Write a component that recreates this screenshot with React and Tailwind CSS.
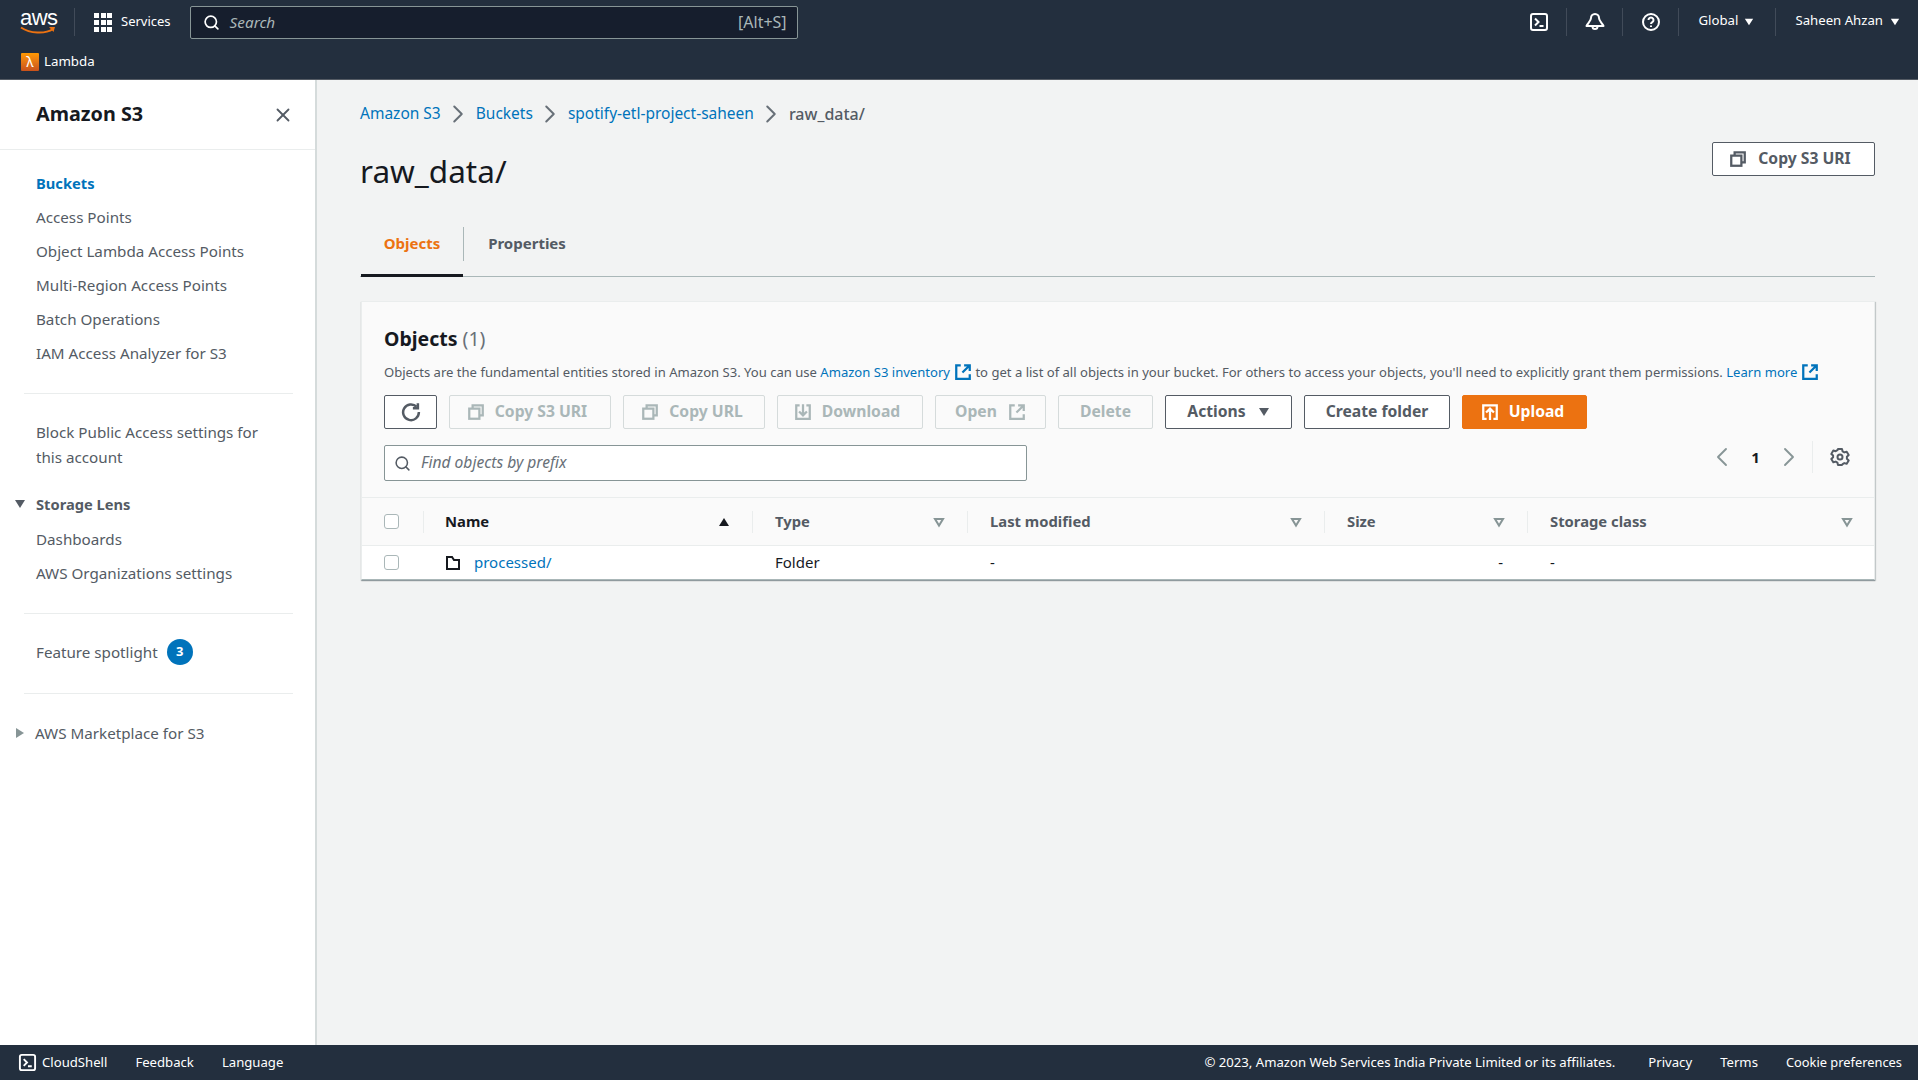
import { Search, X, ChevronRight, ChevronLeft } from "lucide-react";

const Terminal = ({ className }) => (
  <svg viewBox="0 0 20 20" fill="none" stroke="currentColor" className={className}>
    <rect x="2" y="2" width="16" height="16" rx="2" strokeWidth="2" />
    <path d="M6 6.5 9.5 10 6 13.5M10.5 14h4" strokeWidth="2" />
  </svg>
);

const Bell = ({ className }) => (
  <svg viewBox="0 0 20 20" fill="none" stroke="currentColor" strokeWidth="2" className={className}>
    <path d="M10 2C7.500 2 6 4 6 6c0 3-3 5-4.500 8h17C17 11 14 9 14 6c0-2-1.500-4-4-4Z" strokeLinejoin="round" />
    <path d="M7.500 14.500a2.500 2.500 0 0 0 5 0" />
  </svg>
);

const Help = ({ className }) => (
  <svg viewBox="0 0 20 20" fill="none" stroke="currentColor" strokeWidth="2" className={className}>
    <circle cx="10" cy="10" r="8" />
    <path d="M7.500 8a2.500 2.500 0 1 1 3.800 2.100c-.9.600-1.300 1-1.300 2" />
    <path d="M10 13.500v1.500" />
  </svg>
);

const Copy = ({ className }) => (
  <svg viewBox="0 0 16 16" fill="none" stroke="currentColor" strokeWidth="2" className={className}>
    <rect x="2" y="5" width="9" height="9" />
    <path d="M5 5V2h9v9h-3" />
  </svg>
);

const External = ({ className }) => (
  <svg viewBox="0 0 16 16" fill="none" stroke="currentColor" strokeWidth="2" className={className}>
    <path d="M6 2H2v12h12v-4M9 2h5v5M14 2 7.500 8.500" />
  </svg>
);

const Download = ({ className }) => (
  <svg viewBox="0 0 16 16" fill="none" stroke="currentColor" strokeWidth="2" className={className}>
    <path d="M5 2H2v12h12V2h-3M4.500 7.500 8 11l3.500-3.500M8 1v10" />
  </svg>
);

const UploadIcon = ({ className }) => (
  <svg viewBox="0 0 16 16" fill="none" stroke="currentColor" strokeWidth="2" className={className}>
    <path d="M5 14H2V2h12v12h-3M4.500 8.500 8 5l3.500 3.500M8 5v10" />
  </svg>
);

const Refresh = ({ className }) => (
  <svg viewBox="0 0 16 16" fill="none" stroke="currentColor" strokeWidth="2" className={className}>
    <path d="M12.500 3.800A6.300 6.300 0 1 0 14.300 8" />
    <path d="M13.500 1v4h-4" />
  </svg>
);

const Gear = ({ className }) => (
  <svg viewBox="0 0 20 20" fill="none" stroke="currentColor" strokeWidth="2" className={className}>
    <path d="M8 2h4l.6 2.400 1.700 1 2.400-.7 2 3.400-1.800 1.700v1.900l1.800 1.700-2 3.400-2.400-.7-1.700 1L12 18H8l-.6-2.400-1.700-1-2.400.7-2-3.400 1.800-1.700V8.600L1.300 6.900l2-3.400 2.400.7 1.700-1Z" strokeLinejoin="round" />
    <circle cx="10" cy="10" r="2.500" />
  </svg>
);

const Folder = ({ className }) => (
  <svg viewBox="0 0 16 16" fill="none" stroke="currentColor" strokeWidth="2" className={className}>
    <path d="M2 2h5l2 3h5v9H2Z" />
  </svg>
);

const Caret = ({ className }) => (
  <svg viewBox="0 0 12 12" fill="currentColor" className={className}>
    <path d="M1 2h10L6 10Z" />
  </svg>
);

const SortOff = () => (
  <svg viewBox="0 0 12 12" fill="none" stroke="#879596" strokeWidth="2" className="w-3 h-3">
    <path d="M2 3h8L6 9.500Z" />
  </svg>
);

const navTop = ["Access Points", "Object Lambda Access Points", "Multi-Region Access Points", "Batch Operations", "IAM Access Analyzer for S3"];

const Crumb = () => <ChevronRight className="w-[30px] h-[30px] text-[#687078] mx-[2.5px]" strokeWidth={1.6} />;

const Sidebar = () => (
  <aside className="w-[317px] shrink-0 bg-white border-r-2 border-[#d5dbdb] text-[#545b64] text-[15.2px]">
    <div className="h-[70px] border-b border-[#eaeded] flex items-center justify-between pl-9 pr-[21px]">
      <span className="text-[19.8px] font-bold text-[#16191f] -mt-[2px]">Amazon S3</span>
      <X className="w-[22px] h-[22px] text-[#545b64]" strokeWidth={2} />
    </div>
    <nav className="pt-4">
      <a className="flex h-[34px] items-center pl-9 font-bold text-[14.7px] text-[#0073bb]">Buckets</a>
      {navTop.map((item) => (
        <a key={item} className="flex h-[34px] items-center pl-9">{item}</a>
      ))}
      <div className="h-px bg-[#eaeded] ml-6 mr-[22px] mt-[23px]" />
      <div className="pl-9 pr-8 pt-[26px] leading-[25px]">Block Public Access settings for this account</div>
      <div className="flex h-[34px] items-center mt-[17px] pl-[14px] font-bold text-[14.7px]">
        <Caret className="w-3 h-3 mr-[10px]" />
        Storage Lens
      </div>
      <a className="flex h-[34px] items-center pl-9 mt-px">Dashboards</a>
      <a className="flex h-[34px] items-center pl-9">AWS Organizations settings</a>
      <div className="h-px bg-[#eaeded] ml-6 mr-[22px] mt-[23px]" />
      <div className="flex items-center pl-9 mt-[25px] h-[26px]">
        Feature spotlight
        <span className="ml-[9px] w-[26px] h-[26px] rounded-full bg-[#0073bb] text-white text-[13px] font-bold flex items-center justify-center">3</span>
      </div>
      <div className="h-px bg-[#eaeded] ml-6 mr-[22px] mt-[28px]" />
      <div className="flex items-center h-[34px] mt-[22px] pl-[14px]">
        <Caret className="w-3 h-3 mr-[9px] -rotate-90 text-[#879596]" />
        AWS Marketplace for S3
      </div>
    </nav>
  </aside>
);

const Btn = ({ children, w, disabled, primary }) => (
  <button
    className={`h-[34px] rounded-[2px] border flex items-center justify-center gap-2 text-[15.7px] font-bold ${w} ${
      primary
        ? "bg-[#ec7211] border-[#ec7211] text-white"
        : disabled
        ? "bg-[#fafafa] border-[#d5dbdb] text-[#aab7b8]"
        : "bg-white border-[#545b64] text-[#545b64]"
    }`}
  >
    {children}
  </button>
);

const HeaderCell = ({ label, strong, sorted, pl = "pl-[23px]", pr = "pr-[22px]" }) => (
  <div className={`flex items-center justify-between ${pl} ${pr} relative font-bold text-[14.8px] ${strong ? "text-[#16191f]" : "text-[#545b64]"}`}>
    <span className="absolute left-0 top-[13px] h-[22px] w-px bg-[#eaeded]" />
    {label}
    {sorted ? <Caret className="w-3 h-3 rotate-180 text-[#16191f]" /> : <SortOff />}
  </div>
);

const Box = () => <span className="w-[15px] h-[15px] rounded-[3px] border border-[#aab7b8] bg-white block -mt-px" />;

export default function App() {
  return (
    <div className="min-h-screen h-screen flex flex-col bg-[#f2f3f3] font-['Noto_Sans',sans-serif] overflow-hidden">
      <header className="h-[80px] shrink-0 bg-[#232f3e] border-b border-[#545b64] text-white">
        <div className="h-[44px] flex items-center">
          <div className="w-[74px] pl-5 relative">
            <div className="text-[22px] leading-[18px] font-['Liberation_Sans',sans-serif] tracking-[-0.5px] text-white">aws</div>
            <svg viewBox="0 0 36 10" className="w-9 h-[10px] -mt-px">
              <path d="M1 1.500c9 6 24 7 32 1.500" fill="none" stroke="#ec7211" strokeWidth="2" />
              <path d="M29 1h6l-1.500 5Z" fill="#ec7211" />
            </svg>
          </div>
          <div className="w-px h-7 bg-[#414b59]" />
          <div className="grid grid-cols-3 gap-[2px] w-[18px] ml-[19px]">
            {[...Array(9)].map((_, i) => (
              <span key={i} className="w-[5px] h-[5px] bg-white" />
            ))}
          </div>
          <span className="text-[13px] ml-[9px]">Services</span>
          <div className="ml-[19px] w-[608px] h-[33px] bg-[#161e2d] border border-[#879596] rounded-[2px] flex items-center pl-3 pr-[10px] text-[#aab7b8] text-[15.3px]">
            <Search className="w-[17px] h-[17px] text-white mr-[10px]" strokeWidth={2.4} />
            <span className="italic flex-1">Search</span>
            <span className="text-[16px]">[Alt+S]</span>
          </div>
          <div className="flex-1" />
          <Terminal className="w-5 h-5" />
          <div className="w-px h-7 bg-[#414b59] ml-[17px]" />
          <Bell className="w-5 h-5 ml-[18px]" />
          <div className="w-px h-7 bg-[#414b59] ml-[17px]" />
          <Help className="w-5 h-5 ml-[18px]" />
          <div className="w-px h-7 bg-[#414b59] ml-[17px]" />
          <span className="text-[13.2px] ml-5 -mt-[2px]">Global</span>
          <Caret className="w-[10px] h-[10px] ml-[6px] mr-[21px]" />
          <div className="w-px h-7 bg-[#414b59]" />
          <span className="text-[13.2px] ml-[19px] -mt-[2px]">Saheen Ahzan</span>
          <Caret className="w-[10px] h-[10px] ml-[7px] mr-[18px]" />
        </div>
        <div className="h-[35px] flex items-center pl-[21px] text-[13.3px]">
          <span className="w-[18px] h-[18px] rounded-[1px] bg-gradient-to-t from-[#c8511b] to-[#ff9900] flex items-center justify-center text-white text-[14px] leading-none mr-[5px]">λ</span>
          Lambda
        </div>
      </header>

      <div className="flex-1 flex min-h-0">
        <Sidebar />
        <main className="flex-1 pl-[43px] pr-[43px] pt-[23px] min-w-0">
          <div className="flex items-center h-[22px] text-[15.5px]">
            <a className="text-[#0073bb]">Amazon S3</a>
            <Crumb />
            <a className="text-[#0073bb]">Buckets</a>
            <Crumb />
            <a className="text-[#0073bb]">spotify-etl-project-saheen</a>
            <Crumb />
            <span className="text-[#545b64] font-medium text-[16px]">raw_data/</span>
          </div>

          <div className="flex items-start justify-between mt-[21px]">
            <h1 className="text-[31.5px] leading-[50px] text-[#16191f]">raw_data/</h1>
            <div className="-mt-[4px]">
              <Btn w="w-[163px] pr-[7px]"><Copy className="w-[18px] h-[18px]" /><span className="ml-[3px]">Copy S3 URI</span></Btn>
            </div>
          </div>

          <div className="flex mt-[30px] h-[51px] border-b border-[#aab7b8]">
            <div className="w-[102px] ml-[1px] h-[51px] border-b-[3px] border-[#16191f] flex items-center justify-center text-[#ec7211] font-bold text-[15px] pb-[13px]">Objects</div>
            <div className="w-px h-[34px] bg-[#aab7b8] mt-[1px]" />
            <div className="w-[126px] flex items-center justify-center text-[#545b64] font-bold text-[15px] pb-[16px] h-[51px]">Properties</div>
          </div>

          <section className="mt-[24px] ml-[1px] bg-[#fafafa] border border-[#eaeded] border-b-[#aab7b8] shadow-[0_1px_1px_0_rgba(0,28,36,0.3),1px_1px_1px_0_rgba(0,28,36,0.15)]">
            <div className="px-[22px] pt-6">
              <h2 className="text-[19.5px] leading-[26px] font-bold text-[#16191f]">Objects <span className="font-normal text-[#687078]">(1)</span></h2>
              <p className="mt-[10px] text-[13.07px] leading-[20px] text-[#545b64] whitespace-nowrap flex items-center">
                Objects are the fundamental entities stored in Amazon S3. You can use&nbsp;
                <a className="text-[#0073bb] flex items-center">Amazon S3 inventory<External className="w-[18px] h-[18px] ml-[4px]" /></a>
                &nbsp;to get a list of all objects in your bucket. For others to access your objects, you'll need to explicitly grant them permissions.&nbsp;
                <a className="text-[#0073bb] flex items-center">Learn more<External className="w-[18px] h-[18px] ml-[4px]" /></a>
              </p>
              <div className="flex gap-3 mt-[13px]">
                <Btn w="w-[53px]"><Refresh className="w-5 h-5" /></Btn>
                <Btn w="w-[162px] pr-[6px]" disabled><Copy className="w-[18px] h-[18px]" /><span className="ml-[2px]">Copy S3 URI</span></Btn>
                <Btn w="w-[142px] pr-[4px]" disabled><Copy className="w-[18px] h-[18px]" /><span className="ml-[2px]">Copy URL</span></Btn>
                <Btn w="w-[146px] pr-[6px]" disabled><Download className="w-[18px] h-[18px]" /><span className="ml-[2px]">Download</span></Btn>
                <Btn w="w-[111px]" disabled>Open<External className="w-[18px] h-[18px] ml-[3px]" /></Btn>
                <Btn w="w-[95px]" disabled>Delete</Btn>
                <Btn w="w-[127px]">Actions<Caret className="w-3 h-3 ml-1" /></Btn>
                <Btn w="w-[146px]">Create folder</Btn>
                <Btn w="w-[125px] pr-[4px]" primary><UploadIcon className="w-[18px] h-[18px]" /><span className="ml-[2px]">Upload</span></Btn>
              </div>
              <div className="flex items-center justify-between mt-[16px] mb-[16px]">
                <div className="w-[643px] h-[36px] bg-white border border-[#879596] rounded-[2px] flex items-center pl-[9px] text-[#687078] text-[15.6px]">
                  <Search className="w-[17px] h-[17px] text-[#545b64] mr-[10px]" strokeWidth={2.2} />
                  <span className="italic">Find objects by prefix</span>
                </div>
                <div className="flex items-center h-[34px] -mt-[12px] pr-[2px]">
                  <ChevronLeft className="w-8 h-8 text-[#879596]" strokeWidth={1.4} />
                  <span className="w-[35px] text-center text-[15px] font-bold text-[#16191f]">1</span>
                  <ChevronRight className="w-8 h-8 text-[#879596]" strokeWidth={1.4} />
                  <div className="w-px h-8 bg-[#eaeded] ml-[7px] mr-[17px]" />
                  <Gear className="w-5 h-5 text-[#545b64]" />
                </div>
              </div>
            </div>
            <div className="grid grid-cols-[61px_329px_215px_357px_203px_1fr] h-[49px] border-y border-[#eaeded]">
              <div className="pl-[22px] flex items-center"><Box /></div>
              <HeaderCell label="Name" strong sorted pl="pl-[22px]" />
              <HeaderCell label="Type" />
              <HeaderCell label="Last modified" />
              <HeaderCell label="Size" />
              <HeaderCell label="Storage class" pr="pr-[21px]" />
            </div>
            <div className="grid grid-cols-[61px_329px_215px_357px_203px_1fr] h-[33px] bg-white text-[15px] text-[#16191f] items-center">
              <div className="pl-[22px]"><Box /></div>
              <div className="pl-[22px] flex items-center">
                <Folder className="w-4 h-4 mr-[13px] text-[#16191f]" />
                <a className="text-[#0073bb]">processed/</a>
              </div>
              <div className="pl-[23px]">Folder</div>
              <div className="pl-[23px]">-</div>
              <div className="text-right pr-[24px]">-</div>
              <div className="pl-[23px]">-</div>
            </div>
          </section>
        </main>
      </div>

      <footer className="h-[35px] shrink-0 bg-[#232f3e] text-white text-[13.15px] flex items-center pl-[18px] pr-4">
        <Terminal className="w-[19px] h-[19px]" />
        <span className="ml-[5px]">CloudShell</span>
        <span className="ml-7">Feedback</span>
        <span className="ml-7">Language</span>
        <div className="flex-1" />
        <span>© 2023, Amazon Web Services India Private Limited or its affiliates.</span>
        <span className="ml-[33px]">Privacy</span>
        <span className="ml-7">Terms</span>
        <span className="ml-7 text-[12.85px]">Cookie preferences</span>
      </footer>
    </div>
  );
}
